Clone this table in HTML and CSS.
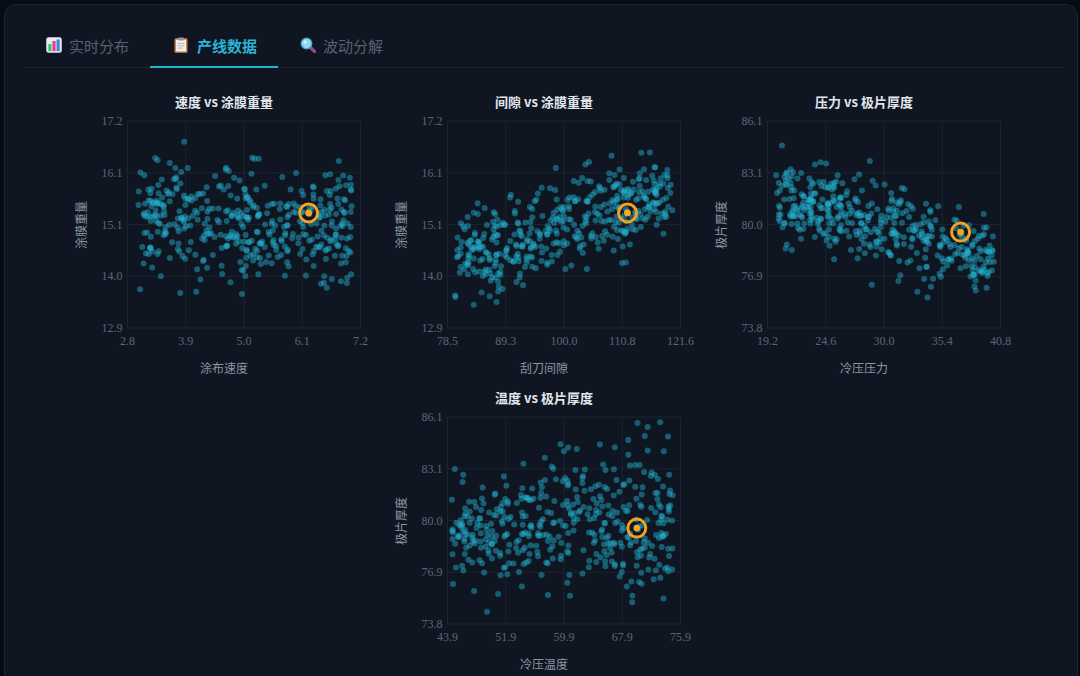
FILE: index.html
```html
<!DOCTYPE html>
<html lang="zh">
<head>
<meta charset="utf-8">
<title>产线数据</title>
<link rel="stylesheet" href="styles.css">
</head>
<body>
<div class="panel">
  <nav class="tabs">
    <div class="tab">
      <svg class="ico" viewBox="0 0 16 16" width="16" height="16">
        <rect x="0.5" y="0.5" width="15" height="15" rx="2" fill="#e9ecef"/>
        <rect x="0.5" y="0.5" width="15" height="15" rx="2" fill="none" stroke="#b9c0c8" stroke-width="0.8"/>
        <rect x="2.3" y="7" width="3.2" height="7.2" fill="#3cc46a"/>
        <rect x="6.4" y="4" width="3.2" height="10.2" fill="#e83e8c"/>
        <rect x="10.5" y="2.5" width="3.2" height="11.7" fill="#3f84e5"/>
      </svg>
      <span>实时分布</span>
    </div>
    <div class="tab active">
      <svg class="ico ico-wide" viewBox="0 0 18 16" width="18" height="16">
        <rect x="2.5" y="1.2" width="13" height="14.5" rx="1.5" fill="#c48a55"/>
        <rect x="4" y="2.8" width="10" height="11.6" fill="#f3efe8"/>
        <rect x="6" y="0.4" width="6" height="3" rx="0.8" fill="#8f969f"/>
        <rect x="5.5" y="6" width="7" height="0.9" fill="#b8b3aa"/>
        <rect x="5.5" y="8.3" width="7" height="0.9" fill="#b8b3aa"/>
        <rect x="5.5" y="10.6" width="5" height="0.9" fill="#b8b3aa"/>
      </svg>
      <span>产线数据</span>
    </div>
    <div class="tab">
      <svg class="ico" viewBox="0 0 16 16" width="16" height="16">
        <line x1="10" y1="10" x2="14.6" y2="14.6" stroke="#8c4e92" stroke-width="3.2" stroke-linecap="round"/>
        <circle cx="6.5" cy="6.5" r="5.3" fill="#8fd9f2" stroke="#4aa2c8" stroke-width="1.3"/>
        <circle cx="5" cy="5" r="1.6" fill="#d8f3fb"/>
      </svg>
      <span>波动分解</span>
    </div>
  </nav>

  <div class="charts">
    <svg class="chart" id="c0" width="320" height="296" viewBox="0 0 320 296">
      <text class="ctitle" x="160" y="24">速度 vs 涂膜重量</text>
      <text class="atitle" transform="translate(16,142) rotate(-90)">涂膜重量</text>
      <text class="atitle" x="160" y="284">涂布速度</text>
    </svg>
    <svg class="chart" id="c1" width="320" height="296" viewBox="0 0 320 296">
      <text class="ctitle" x="160" y="24">间隙 vs 涂膜重量</text>
      <text class="atitle" transform="translate(16,142) rotate(-90)">涂膜重量</text>
      <text class="atitle" x="160" y="284">刮刀间隙</text>
    </svg>
    <svg class="chart" id="c2" width="320" height="296" viewBox="0 0 320 296">
      <text class="ctitle" x="160" y="24">压力 vs 极片厚度</text>
      <text class="atitle" transform="translate(16,142) rotate(-90)">极片厚度</text>
      <text class="atitle" x="160" y="284">冷压压力</text>
    </svg>
    <svg class="chart" id="c3" width="320" height="296" viewBox="0 0 320 296">
      <text class="ctitle" x="160" y="24">温度 vs 极片厚度</text>
      <text class="atitle" transform="translate(16,142) rotate(-90)">极片厚度</text>
      <text class="atitle" x="160" y="284">冷压温度</text>
    </svg>
  </div>
</div>
<script src="app.js"></script>
</body>
</html>
```

FILE: styles.css
```css
html, body {
  margin: 0;
  padding: 0;
}
body {
  background: #070b12;
  font-family: "Noto Sans CJK SC", "Noto Sans", sans-serif;
  height: 676px;
  overflow: hidden;
}
.panel {
  box-sizing: border-box;
  margin: 4px 0 0 4px;
  width: 1074px;
  min-height: 720px;
  background: #0f1622;
  border: 1px solid #17243a;
  border-radius: 12px;
  padding: 19px 13px 0 19px;
}
.tabs {
  display: flex;
  border-bottom: 1px solid #1a2738;
}
.tab {
  box-sizing: border-box;
  display: flex;
  align-items: center;
  gap: 7px;
  height: 44px;
  padding: 0 21px 0 22px;
  font-size: 15px;
  color: #566272;
  border-bottom: 2px solid transparent;
  margin-bottom: -1px;
}
.tab.active {
  color: #2bb4d4;
  font-weight: 700;
  border-bottom-color: #25b3cf;
}
.ico {
  display: block;
  flex: none;
}
.charts {
  display: flex;
  flex-wrap: wrap;
  justify-content: center;
  margin-top: 15px;
}
.chart {
  display: block;
  flex: none;
}
.ctitle {
  font-size: 13px;
  font-weight: 700;
  fill: #e2e7ee;
  text-anchor: middle;
}
.atitle {
  font-size: 12px;
  fill: #8a95a2;
  text-anchor: middle;
  dominant-baseline: central;
}
.grid {
  stroke: #1a2431;
  stroke-width: 1;
}
.tick {
  font-family: "Liberation Serif", "DejaVu Serif", serif;
  font-size: 12px;
  fill: #5b6776;
}
.tick-y {
  text-anchor: end;
  dominant-baseline: central;
}
.tick-x {
  text-anchor: middle;
}
.dot {
  fill: #24b6d4;
  fill-opacity: 0.45;
}
.hl-ring {
  fill: none;
  stroke: #f2a223;
  stroke-width: 3;
}
.hl-dot {
  fill: #f5a623;
}
```

FILE: app.js
```js
(function () {
  var NS = 'http://www.w3.org/2000/svg';
  function mulberry32(a) {
    return function () {
      a |= 0; a = a + 0x6D2B79F5 | 0;
      var t = Math.imul(a ^ a >>> 15, 1 | a);
      t = t + Math.imul(t ^ t >>> 7, 61 | t) ^ t;
      return ((t ^ t >>> 14) >>> 0) / 4294967296;
    };
  }
  var R = mulberry32(20240611);
  function norm() {
    var u = 0; while (u === 0) u = R();
    var v = R();
    return Math.sqrt(-2 * Math.log(u)) * Math.cos(2 * Math.PI * v);
  }
  var L = 63.5, RT = 296.5, T = 38, B = 245;

  var charts = [
    { id: 'c0', xr: [2.8, 7.2], yr: [12.9, 17.2],
      xt: ['2.8', '3.9', '5.0', '6.1', '7.2'], yt: ['12.9', '14.0', '15.1', '16.1', '17.2'],
      n: 420, gen: function () { var x = 3 + R() * 4.05; return [x, 15.22 - 0.07 * (x - 3) + norm() * 0.55]; },
      hl: [6.22, 15.29] },
    { id: 'c1', xr: [78.5, 121.6], yr: [12.9, 17.2],
      xt: ['78.5', '89.3', '100.0', '110.8', '121.6'], yt: ['12.9', '14.0', '15.1', '16.1', '17.2'],
      n: 420, gen: function () { var x = 79.8 + R() * 40.4; return [x, 14.35 + 0.034 * (x - 80) + norm() * 0.44]; },
      hl: [111.8, 15.29] },
    { id: 'c2', xr: [19.2, 40.8], yr: [73.8, 86.1],
      xt: ['19.2', '24.6', '30.0', '35.4', '40.8'], yt: ['73.8', '76.9', '80.0', '83.1', '86.1'],
      n: 420, gen: function () { var x = 20 + R() * 20.2; return [x, 81.8 - 0.2 * (x - 20) + norm() * 1.2]; },
      hl: [37.1, 79.5] },
    { id: 'c3', xr: [43.9, 75.9], yr: [73.8, 86.1],
      xt: ['43.9', '51.9', '59.9', '67.9', '75.9'], yt: ['73.8', '76.9', '80.0', '83.1', '86.1'],
      n: 420, gen: function () { var x = 44.5 + R() * 30.8; return [x, 79.4 + 0.02 * (x - 44) + norm() * (1.45 + 0.035 * (x - 44))]; },
      hl: [69.9, 79.5] }
  ];

  function el(name, attrs, cls) {
    var e = document.createElementNS(NS, name);
    for (var k in attrs) e.setAttribute(k, attrs[k]);
    if (cls) e.setAttribute('class', cls);
    return e;
  }

  charts.forEach(function (c) {
    var svg = document.getElementById(c.id);
    var first = svg.firstChild;
    var sx = function (v) { return L + (v - c.xr[0]) / (c.xr[1] - c.xr[0]) * (RT - L); };
    var sy = function (v) { return B - (v - c.yr[0]) / (c.yr[1] - c.yr[0]) * (B - T); };
    var g = el('g', {});
    for (var i = 0; i < 5; i++) {
      var px = L + (RT - L) * i / 4;
      var py = B - (B - T) * i / 4;
      g.appendChild(el('line', { x1: px, y1: T, x2: px, y2: B }, 'grid'));
      g.appendChild(el('line', { x1: L, y1: py, x2: RT, y2: py }, 'grid'));
      var ty = el('text', { x: L - 5, y: py }, 'tick tick-y');
      ty.textContent = c.yt[i];
      g.appendChild(ty);
      var tx = el('text', { x: px, y: 262 }, 'tick tick-x');
      tx.textContent = c.xt[i];
      g.appendChild(tx);
    }
    var ylo = c.yr[0] + (c.yr[1] - c.yr[0]) * 0.03;
    var yhi = c.yr[1] - (c.yr[1] - c.yr[0]) * 0.02;
    for (var j = 0; j < c.n; j++) {
      var p = c.gen();
      if (p[1] < ylo || p[1] > yhi) { j--; continue; }
      g.appendChild(el('circle', { cx: sx(p[0]).toFixed(1), cy: sy(p[1]).toFixed(1), r: 3 }, 'dot'));
    }
    var hx = sx(c.hl[0]), hy = sy(c.hl[1]);
    g.appendChild(el('circle', { cx: hx, cy: hy, r: 9 }, 'hl-ring'));
    g.appendChild(el('circle', { cx: hx, cy: hy, r: 3.4 }, 'hl-dot'));
    svg.insertBefore(g, first);
  });
})();
```
